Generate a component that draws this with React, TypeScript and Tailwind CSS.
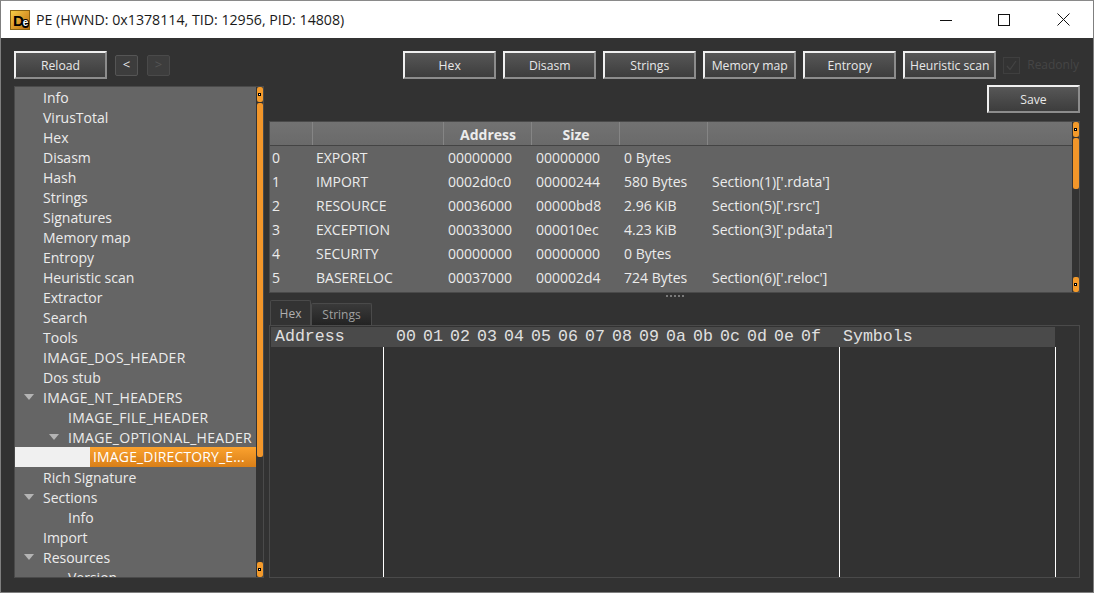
const font = { fontFamily: '"Open Sans", "Noto Sans", sans-serif' };

const tree: [string, number, boolean?][] = [
  ["Info", 0], ["VirusTotal", 0], ["Hex", 0], ["Disasm", 0], ["Hash", 0], ["Strings", 0], ["Signatures", 0],
  ["Memory map", 0], ["Entropy", 0], ["Heuristic scan", 0], ["Extractor", 0], ["Search", 0], ["Tools", 0],
  ["IMAGE_DOS_HEADER", 0], ["Dos stub", 0], ["IMAGE_NT_HEADERS", 0, true], ["IMAGE_FILE_HEADER", 1],
  ["IMAGE_OPTIONAL_HEADER", 1, true], ["IMAGE_DIRECTORY_E...", 2], ["Rich Signature", 0], ["Sections", 0, true],
  ["Info", 1], ["Import", 0], ["Resources", 0, true], ["Version", 1],
];

const rows = [
  ["0", "EXPORT", "00000000", "00000000", "0 Bytes", ""],
  ["1", "IMPORT", "0002d0c0", "00000244", "580 Bytes", "Section(1)['.rdata']"],
  ["2", "RESOURCE", "00036000", "00000bd8", "2.96 KiB", "Section(5)['.rsrc']"],
  ["3", "EXCEPTION", "00033000", "000010ec", "4.23 KiB", "Section(3)['.pdata']"],
  ["4", "SECURITY", "00000000", "00000000", "0 Bytes", ""],
  ["5", "BASERELOC", "00037000", "000002d4", "724 Bytes", "Section(6)['.reloc']"],
];

const colW = ["w-[43px]", "w-[131px]", "w-[88px]", "w-[88px]", "w-[88px]", "flex-1"];
const hexCols = ["00", "01", "02", "03", "04", "05", "06", "07", "08", "09", "0a", "0b", "0c", "0d", "0e", "0f"];

function Btn({ label }: { label: string }) {
  return (
    <button className="w-[93px] h-[28px] pt-[2px] flex items-center justify-center text-[12.2px] text-[#e8e8e8] bg-gradient-to-b from-[#575757] to-[#3d3d3d] border-2 whitespace-nowrap border-t-[#f0f0f0] border-l-[#f0f0f0] border-r-[#8c8c8c] border-b-[#8c8c8c]">
      {label}
    </button>
  );
}

function ScrollEnd() {
  return (
    <div className="w-[6px] h-[15px] mx-auto rounded-[2px] bg-[#f39a2b] flex items-center justify-center">
      <div className="w-[3px] h-[3px] bg-black flex items-center justify-center">
        <div className="w-[1px] h-[1px] bg-white" />
      </div>
    </div>
  );
}

function Arrow() {
  return (
    <svg width="10" height="6" viewBox="0 0 10 6" className="shrink-0">
      <path d="M0 0H10L5 6Z" fill="#b4b4b4" />
    </svg>
  );
}

function Scrollbar({ thumb }: { thumb: string }) {
  return (
    <div className="w-[7px] shrink-0 flex flex-col bg-[#333333]">
      <ScrollEnd />
      <div className="flex-1 pt-[1px] flex flex-col min-h-0 bg-[#333333]">
        <div className={`${thumb} w-[6px] mx-auto rounded-[2px] bg-[#f2962a]`} />
      </div>
      <ScrollEnd />
    </div>
  );
}

export default function App() {
  return (
    <div style={font} className="w-[1094px] h-[593px] flex flex-col overflow-hidden border border-[#7f7f7f] border-t-[#8a8a8a]">
      <div className="h-[37px] shrink-0 bg-white flex items-center pl-[9px] text-[#1a1a1a]">
        <div className="w-[20px] h-[20px] shrink-0 bg-gradient-to-br from-[#f6cc45] to-[#c06f0c] border border-[#8a6414] flex items-end relative overflow-hidden pl-[2px]">
          <span className="text-[15px] font-bold text-black leading-[16px]" style={{ fontFamily: '"Liberation Sans", sans-serif' }}>D</span>
          <span className="text-[10px] font-bold text-white bg-black rounded-full w-[9px] h-[9px] flex items-center justify-center leading-none -ml-[2px] mb-[1px]" style={{ fontFamily: '"Liberation Sans", sans-serif' }}>e</span>
        </div>
        <span className="ml-[6px] text-[14.2px] whitespace-nowrap">PE (HWND: 0x1378114, TID: 12956, PID: 14808)</span>
        <div className="ml-auto flex items-center h-full">
          <svg width="12" height="12" viewBox="0 0 12 12" className="mr-[46px]"><path d="M0 6.5H12" stroke="#111" strokeWidth="1" /></svg>
          <svg width="12" height="12" viewBox="0 0 12 12" className="mr-[47px]"><rect x="0.5" y="0.5" width="11" height="11" fill="none" stroke="#111" /></svg>
          <svg width="13" height="13" viewBox="0 0 13 13" className="mr-[23px]"><path d="M0.5 0.5L12.5 12.5M12.5 0.5L0.5 12.5" stroke="#111" strokeWidth="1" /></svg>
        </div>
      </div>

      <div className="flex-1 min-h-0 bg-[#323232] pl-[13px] pr-[13px] pt-[13px] flex flex-col">
        <div className="flex items-center h-[28px] shrink-0">
          <Btn label="Reload" />
          <button className="ml-[8px] w-[23px] h-[21px] rounded-[2px] bg-[#3d3d3d] border border-[#555555] text-[#e8e8e8] text-[13px] flex items-center justify-center">&lt;</button>
          <button className="ml-[9px] w-[23px] h-[21px] rounded-[2px] bg-[#3d3d3d] border border-[#4a4a4a] text-[#555555] text-[13px] flex items-center justify-center">&gt;</button>
          <div className="ml-auto flex items-center gap-[7px]">
            {["Hex", "Disasm", "Strings", "Memory map", "Entropy", "Heuristic scan"].map((l) => (
              <Btn key={l} label={l} />
            ))}
            <div className="w-[17px] h-[17px] border border-[#3f3f3f] bg-[#333333] flex items-center justify-center">
              <svg width="11" height="11" viewBox="0 0 11 11"><path d="M1 6L4 9.5L10 1" fill="none" stroke="#444" strokeWidth="1.2" /></svg>
            </div>
            <span className="text-[12px] text-[#454545] mr-[1px]">Readonly</span>
          </div>
        </div>

        <div className="flex gap-[5px] mt-[6px] h-[493px] shrink-0">
          <div className="w-[250px] mt-[1px] shrink-0 flex bg-[#656565] border border-[#4a4a4a] overflow-hidden">
            <div className="flex-1 min-w-0 overflow-hidden text-[14px] text-[#ececec]">
              {tree.map(([label, level, open], i) =>
                label.endsWith("...") ? (
                  <div key={i} className="h-[20px] flex bg-[#f0f0f0]">
                    <div className="w-[75px] shrink-0" />
                    <div className="flex-1 bg-gradient-to-b from-[#fba22e] to-[#d97f18] pl-[3px] leading-[20px] text-white whitespace-nowrap overflow-hidden tracking-[0.15px]">{label}</div>
                  </div>
                ) : (
                  <div key={i} className={`h-[20px] flex items-center whitespace-nowrap ${level === 0 ? "pl-[9px]" : "pl-[34px]"} ${label.startsWith("IMAGE_") ? "tracking-[0.3px]" : ""}`}>
                    <div className="w-[19px] shrink-0 flex items-center">{open && <Arrow />}</div>
                    {label}
                  </div>
                )
              )}
            </div>
            <Scrollbar thumb="h-[354px]" />
          </div>

          <div className="flex-1 min-w-0 flex flex-col">
            <div className="flex justify-end shrink-0 pr-0">
              <Btn label="Save" />
            </div>
            <div className="mt-[8px] h-[172px] shrink-0 flex border border-[#4a4a4a] bg-[#636363] text-[14px] text-[#ececec]">
              <div className="flex-1 min-w-0 flex flex-col">
                <div className="h-[24px] flex bg-gradient-to-b from-[#727272] to-[#6a6a6a] border-b border-[#444444] font-bold">
                  {["", "", "Address", "Size", "", ""].map((h, i) => (
                    <div key={i} className={`${colW[i]} ${i < 5 ? "border-r border-[#858585]" : ""} pl-[1px] pt-[1px] flex items-center justify-center`}>{h}</div>
                  ))}
                </div>
                {rows.map((r, i) => (
                  <div key={i} className="h-[24px] pb-[2px] flex items-center whitespace-nowrap">
                    {r.map((c, j) => (
                      <div key={j} className={`${colW[j]} ${j === 0 ? "pl-[2px]" : j === 1 ? "pl-[3px]" : "pl-[4px]"}`}>{c}</div>
                    ))}
                  </div>
                ))}
              </div>
              <Scrollbar thumb="h-[51px]" />
            </div>

            <div className="h-[8px] pb-[2px] shrink-0 flex items-center justify-center">
              <div className="w-[18px] h-[2px] border-t-2 border-dotted border-[#7a7a7a]" />
            </div>

            <div className="flex items-end h-[24px] shrink-0 text-[12px] pl-[1px]">
              <div className="w-[41px] h-[25px] pt-[1px] bg-[#333333] border border-b-0 border-[#4a4a4a] rounded-t-[2px] text-[#b0b0b0] flex items-center justify-center">Hex</div>
              <div className="w-[61px] h-[22px] bg-gradient-to-b from-[#3a3a3a] to-[#232323] border border-b-0 border-[#4a4a4a] rounded-t-[2px] text-[#a0a0a0] flex items-center justify-center">Strings</div>
            </div>

            <div className="flex-1 min-h-0 border border-[#4a4a4a] pt-[1px] px-[1px] flex flex-col text-[#e0e0e0]">
              <div className="h-[20px] pt-[1px] shrink-0 w-[784px] bg-[#4a4a4a] flex items-center text-[16.6px] leading-none whitespace-nowrap" style={{ fontFamily: '"Liberation Mono", monospace' }}>
                <span className="w-[125px] pl-[4px]">Address</span>
                <span className="flex w-[447px]">
                  {hexCols.map((h) => (
                    <span key={h} className="w-[27px] shrink-0">{h}</span>
                  ))}
                </span>
                <span>Symbols</span>
              </div>
              <div className="flex-1 flex min-h-0 ml-[1px]">
                <div className="w-[112px] border-r border-white" />
                <div className="w-[456px] border-r border-white" />
                <div className="w-[216px] border-r border-white" />
              </div>
            </div>
          </div>
        </div>
      </div>
    </div>
  );
}
